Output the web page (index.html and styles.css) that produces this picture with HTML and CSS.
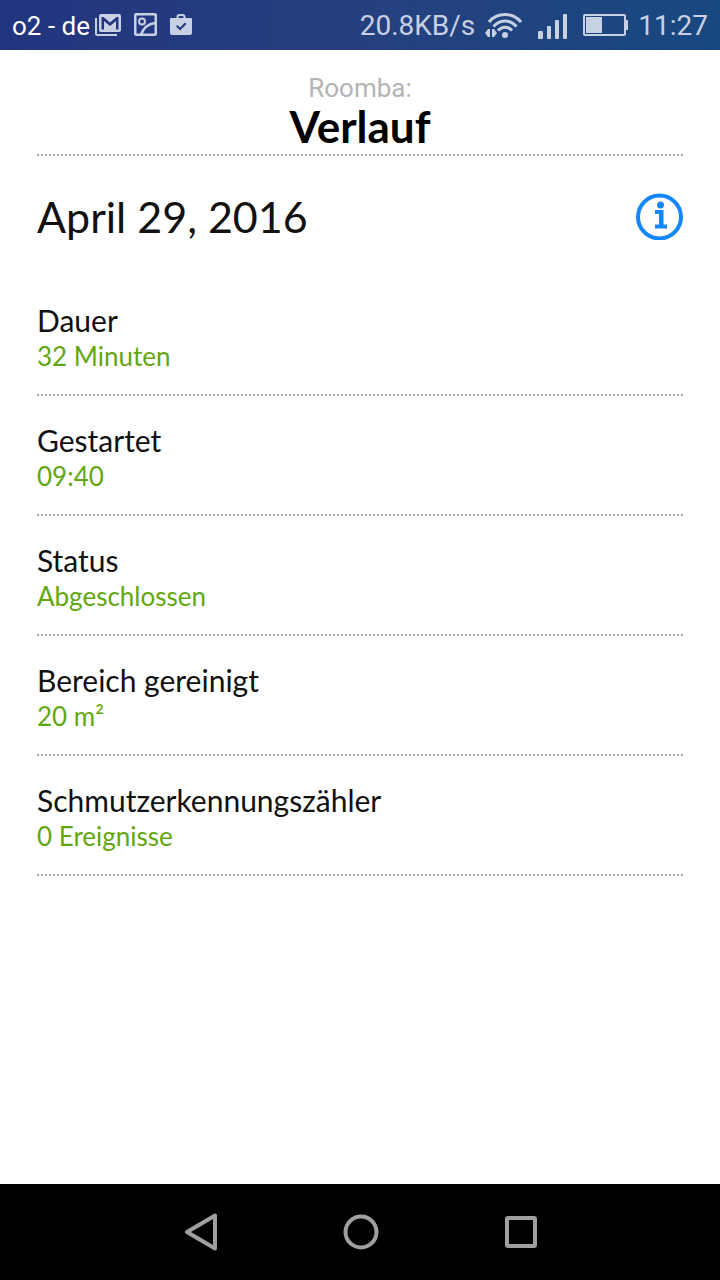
FILE: index.html
```html
<!DOCTYPE html>
<html lang="de">
<head>
<meta charset="utf-8">
<meta name="viewport" content="width=device-width, initial-scale=1">
<title>Roomba: Verlauf</title>
<link rel="stylesheet" href="styles.css">
</head>
<body>
<div class="statusbar">
  <div class="status-left">
    <span class="carrier">o2 - de</span>
    <svg class="notice" width="26" height="22" viewBox="0 0 26 22" aria-hidden="true">
      <path fill="none" stroke="currentColor" stroke-width="2" d="M1 4v15.500q0 1.500 1.500 1.500H22"/>
      <path fill="currentColor" fill-rule="evenodd" d="M6 0h18q2 0 2 2v14q0 2-2 2H6q-2 0-2-2V2q0-2 2-2zM6.500 3v12.500h2.500V7l6 5 6-5v8.500h2.500V3h-2L15 8.500 8.500 3z"/>
    </svg>
    <svg class="notice" width="23" height="23" viewBox="0 0 23 23" fill="none" stroke="currentColor" aria-hidden="true">
      <rect x="1.250" y="1.250" width="20.500" height="20.500" rx="1" stroke-width="2.500"/>
      <circle cx="8" cy="8.500" r="3" stroke-width="2"/>
      <path stroke-width="2.500" d="M7 22C9 16 13 11 21 10"/>
    </svg>
    <svg class="notice" width="22" height="22" viewBox="0 0 22 22" aria-hidden="true">
      <path fill="none" stroke="currentColor" stroke-width="2" d="M7.500 5V3q0-2 2-2h3q2 0 2 2v2"/>
      <path fill="currentColor" fill-rule="evenodd" d="M1 4h20q1 0 1 1v14q0 2-2 2H2q-2 0-2-2V5q0-1 1-1zM6 12.500L10 16.500 16.500 10 15 8.500 10 13.500 7.500 11z"/>
    </svg>
  </div>
  <div class="status-right">
    <span class="speed">20.8KB/s</span>
    <svg width="37" height="26" viewBox="0 0 37 26" fill="none" stroke="currentColor" aria-hidden="true">
      <path stroke-width="3" d="M4 9C12-1 28-1 36 9M8.500 13.500C15 6 25 6 31.500 13.500M13 17.500C17 13 23 13 27 17.500"/>
      <circle cx="20" cy="22" r="3" fill="currentColor" stroke="none"/>
      <path fill="currentColor" stroke="none" d="M5 16v8H3l-3-4 3-4zM7 16h2l3 4-3 4H7z"/>
    </svg>
    <svg class="signal" width="30" height="25" viewBox="0 0 30 25" fill="currentColor" aria-hidden="true">
      <rect x="0" y="17" width="5" height="8" rx="1"/><rect x="9" y="12" width="4" height="13" rx="1"/><rect x="17" y="6" width="4" height="19" rx="1"/><rect x="25" y="0" width="4" height="25" rx="1"/>
    </svg>
    <svg class="battery" width="45" height="22" viewBox="0 0 45 22" aria-hidden="true">
      <rect x="1" y="1" width="41" height="20" rx="1" fill="none" stroke="currentColor" stroke-width="2"/>
      <path fill="currentColor" d="M3 3h16v16H3zM43 6h2v10h-2z"/>
    </svg>
    <time class="clock">11:27</time>
  </div>
</div>

<main class="page">
  <header class="heading">
    <p class="device">Roomba:</p>
    <h1 class="title">Verlauf</h1>
  </header>
  <div class="daybar">
    <h2 class="date">April 29, 2016</h2>
    <button class="info" type="button" aria-label="Info">
      <svg width="48" height="48" viewBox="0 0 48 48" fill="currentColor" aria-hidden="true">
        <circle cx="24.500" cy="25" r="21.500" fill="none" stroke="currentColor" stroke-width="4"/>
        <circle cx="25.500" cy="13" r="3.500"/>
        <path d="M20 18h8.500v14.500h3.500v4H20v-4h4V22h-4z"/>
      </svg>
    </button>
  </div>
  <dl class="details">
    <div class="row"><dt>Dauer</dt><dd>32 Minuten</dd></div>
    <div class="row"><dt>Gestartet</dt><dd>09:40</dd></div>
    <div class="row"><dt>Status</dt><dd>Abgeschlossen</dd></div>
    <div class="row"><dt>Bereich gereinigt</dt><dd>20 m²</dd></div>
    <div class="row"><dt>Schmutzerkennungszähler</dt><dd>0 Ereignisse</dd></div>
  </dl>
</main>

<nav class="navbar">
  <button type="button" aria-label="Zurück">
    <svg width="40" height="40" viewBox="0 0 40 40" aria-hidden="true"><path d="M35 3.500v33L7 20z"/></svg>
  </button>
  <button type="button" aria-label="Startseite">
    <svg width="40" height="40" viewBox="0 0 40 40" aria-hidden="true"><circle cx="21" cy="20" r="15.500"/></svg>
  </button>
  <button type="button" aria-label="Übersicht">
    <svg width="40" height="40" viewBox="0 0 40 40" aria-hidden="true"><rect x="7" y="6" width="28" height="28" rx="1"/></svg>
  </button>
</nav>
</body>
</html>
```
FILE: styles.css
```css
* {
  box-sizing: border-box;
}

body {
  margin: 0;
  min-height: 100vh;
  display: flex;
  flex-direction: column;
  background: #fff;
  color: #111;
  font-family: Lato, sans-serif;
}

svg {
  display: block;
  flex: none;
}

button {
  padding: 0;
  border: 0;
  background: none;
  cursor: pointer;
}

.statusbar {
  height: 50px;
  padding: 2px 12px 0;
  display: flex;
  align-items: center;
  justify-content: space-between;
  background: linear-gradient(100deg, #22347f, #26407f 50%, #184880);
  color: #c8d0e4;
  font-family: Roboto, sans-serif;
  font-size: 28px;
  line-height: 48px;
  white-space: nowrap;
}

.status-left,
.status-right {
  display: flex;
  align-items: center;
}

.status-left {
  gap: 13px;
}

.notice {
  margin-bottom: 3px;
}

.carrier {
  margin-right: -8px;
  color: #fff;
  font-size: 26px;
}

.status-right {
  gap: 10px;
}

.signal {
  margin-left: 6px;
}

.battery {
  margin-left: 5px;
  margin-bottom: 2px;
}

.page {
  flex: 1;
  padding: 22px 37px 0;
}

.heading {
  height: 84px;
  border-bottom: 2px dotted #aaa;
  text-align: center;
}

.device {
  margin: 0;
  color: #b4b4b4;
  font-family: Roboto, sans-serif;
  font-size: 26px;
  line-height: 32px;
}

.title {
  margin: 0;
  color: #000;
  font-size: 44px;
  font-weight: 700;
  line-height: 44px;
}

.daybar {
  height: 120px;
  display: flex;
  align-items: center;
  justify-content: space-between;
}

.date {
  margin: 0;
  font-size: 43px;
  font-weight: 400;
}

.info {
  color: #1486fb;
}

.details {
  margin: 0;
}

.row {
  height: 120px;
  padding-top: 27px;
  border-bottom: 2px dotted #aaa;
}

.row dt {
  font-size: 30px;
  line-height: 35px;
}

.row dd {
  margin: 0;
  color: #62a70f;
  font-size: 26px;
  line-height: 36px;
}

.navbar {
  height: 96px;
  padding: 0 120px;
  display: flex;
  align-items: center;
  background: #000;
}

.navbar button {
  flex: 1;
  display: flex;
  justify-content: center;
}

.navbar svg {
  fill: none;
  stroke: #a0a0a0;
  stroke-width: 4;
  stroke-linejoin: round;
}
```
